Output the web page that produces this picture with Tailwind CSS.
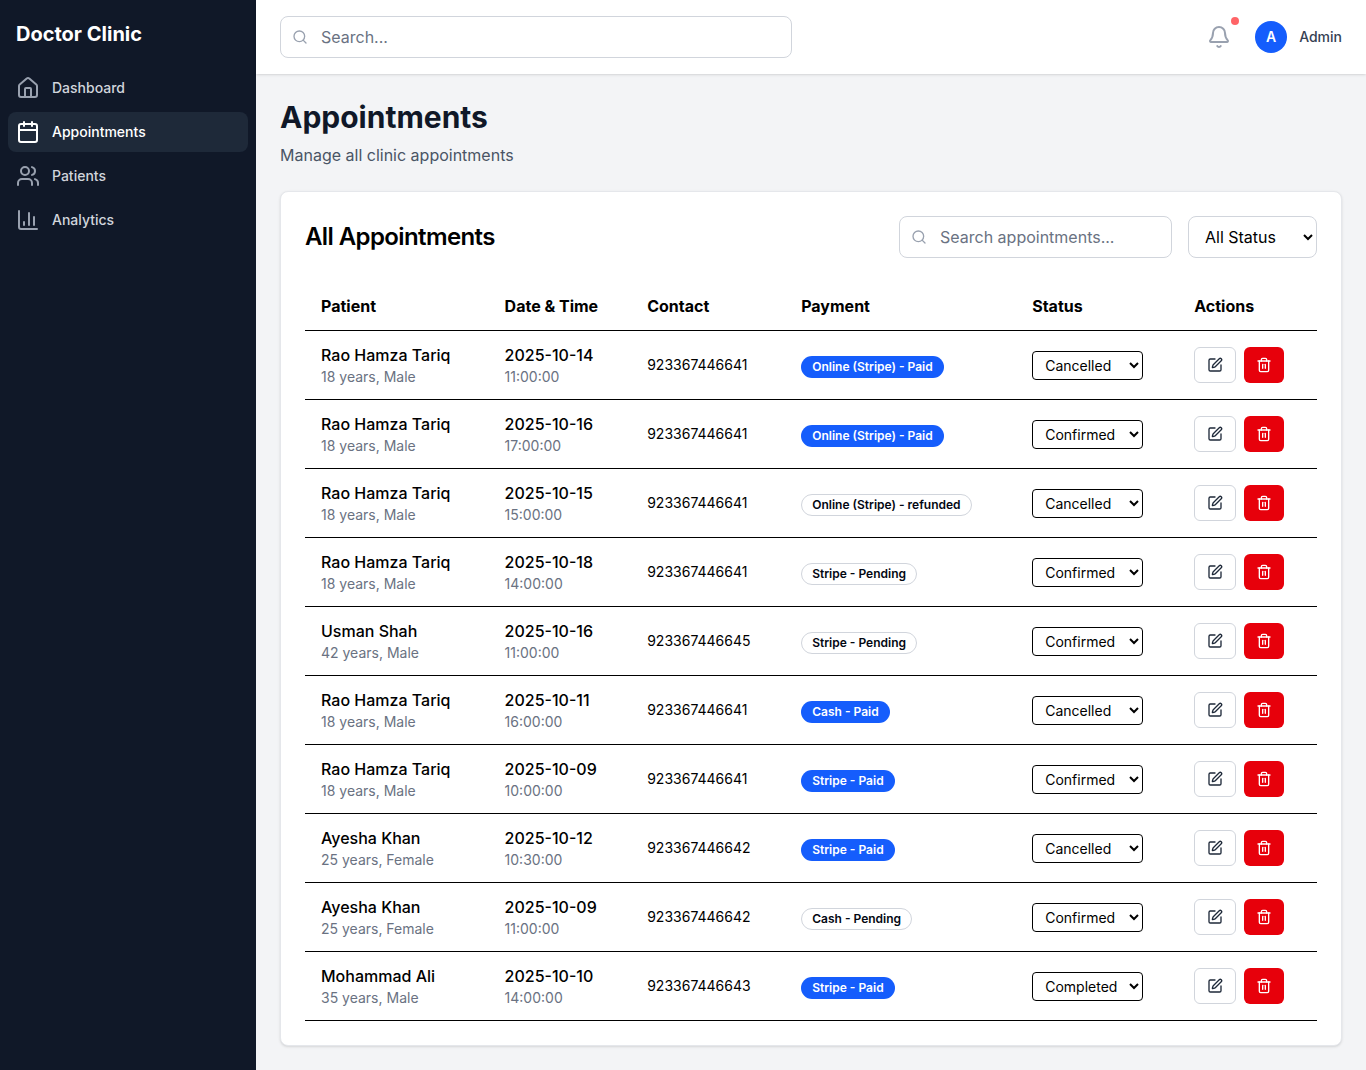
<!DOCTYPE html>
<html lang="en">
  <head>
    <meta charset="UTF-8" />
    <meta name="viewport" content="width=device-width, initial-scale=1.0" />
    <title>Doctor Clinic</title>
    <script src="https://cdn.jsdelivr.net/npm/@tailwindcss/browser@4"></script>
  </head>
  <body class="bg-gray-100 font-[Inter,sans-serif] text-black">
    <div class="flex min-h-screen">
      <aside class="w-64 shrink-0 bg-gray-900">
        <h1 class="pl-4 pt-5 pb-[18px] text-xl leading-7 font-bold text-white">Doctor Clinic</h1>
        <nav class="flex flex-col gap-1 px-2 pt-[2px] text-sm font-medium">
          <a class="flex h-10 items-center gap-3 rounded-lg px-2 text-gray-300">
            <svg class="size-6 text-gray-400" viewBox="0 0 24 24" fill="none" stroke="currentColor" stroke-width="2" stroke-linecap="round" stroke-linejoin="round"><path d="M15 21v-8a1 1 0 0 0-1-1h-4a1 1 0 0 0-1 1v8"/><path d="M3 10a2 2 0 0 1 .709-1.528l7-6a2 2 0 0 1 2.582 0l7 6A2 2 0 0 1 21 10v9a2 2 0 0 1-2 2H5a2 2 0 0 1-2-2z"/></svg>
            Dashboard
          </a>
          <a class="flex h-10 items-center gap-3 rounded-lg bg-gray-800 px-2 text-white">
            <svg class="size-6" viewBox="0 0 24 24" fill="none" stroke="currentColor" stroke-width="2" stroke-linecap="round" stroke-linejoin="round"><path d="M8 2v4"/><path d="M16 2v4"/><rect width="18" height="18" x="3" y="4" rx="2"/><path d="M3 10h18"/></svg>
            Appointments
          </a>
          <a class="flex h-10 items-center gap-3 rounded-lg px-2 text-gray-300">
            <svg class="size-6 text-gray-400" viewBox="0 0 24 24" fill="none" stroke="currentColor" stroke-width="2" stroke-linecap="round" stroke-linejoin="round"><path d="M16 21v-2a4 4 0 0 0-4-4H6a4 4 0 0 0-4 4v2"/><circle cx="9" cy="7" r="4"/><path d="M22 21v-2a4 4 0 0 0-3-3.87"/><path d="M16 3.13a4 4 0 0 1 0 7.75"/></svg>
            Patients
          </a>
          <a class="flex h-10 items-center gap-3 rounded-lg px-2 text-gray-300">
            <svg class="size-6 text-gray-400" viewBox="0 0 24 24" fill="none" stroke="currentColor" stroke-width="2" stroke-linecap="round" stroke-linejoin="round"><path d="M3 3v16a2 2 0 0 0 2 2h16"/><path d="M18 17V9"/><path d="M13 17V5"/><path d="M8 17v-3"/></svg>
            Analytics
          </a>
        </nav>
      </aside>

      <div class="flex min-w-0 flex-1 flex-col">
        <header class="flex h-[74px] items-center justify-between bg-white px-6 shadow-sm">
          <div class="relative w-[512px]">
            <svg class="absolute top-[13px] left-3 size-4 text-gray-400" viewBox="0 0 24 24" fill="none" stroke="currentColor" stroke-width="2" stroke-linecap="round" stroke-linejoin="round"><path d="m21 21-4.34-4.34"/><circle cx="11" cy="11" r="8"/></svg>
            <input placeholder="Search..." class="h-[42px] w-full rounded-lg border border-gray-300 pr-4 pl-10 placeholder:text-gray-500" />
          </div>
          <div class="flex items-center gap-4">
            <div class="relative mr-[5px] flex size-[30px] items-center justify-center">
              <svg class="size-6 text-gray-400" viewBox="0 0 24 24" fill="none" stroke="currentColor" stroke-width="2" stroke-linecap="round" stroke-linejoin="round"><path d="M10.268 21a2 2 0 0 0 3.464 0"/><path d="M3.262 15.326A1 1 0 0 0 4 17h16a1 1 0 0 0 .74-1.673C19.41 13.956 18 12.499 18 8A6 6 0 0 0 6 8c0 4.499-1.411 5.956-2.738 7.326"/></svg>
              <span class="absolute -top-[5px] right-[-5px] size-2 rounded-full bg-red-400"></span>
            </div>
            <div class="flex items-center gap-3">
              <div class="flex size-8 items-center justify-center rounded-full bg-blue-600 text-sm font-semibold text-white">A</div>
              <span class="text-sm font-medium text-gray-700">Admin</span>
            </div>
          </div>
        </header>

        <main class="flex-1 p-6">
          <h2 class="pt-[1px] text-3xl leading-9 font-bold text-gray-900">Appointments</h2>
          <p class="mt-2 text-base text-gray-600">Manage all clinic appointments</p>

          <section class="mt-6 rounded-lg border border-gray-200 bg-white p-6 shadow-sm">
            <div class="mb-6 flex items-center justify-between">
              <h3 class="text-2xl font-semibold tracking-tight">All Appointments</h3>
              <div class="flex items-center gap-4">
                <div class="relative w-[273px]">
                  <svg class="absolute top-[13px] left-3 size-4 text-gray-400" viewBox="0 0 24 24" fill="none" stroke="currentColor" stroke-width="2" stroke-linecap="round" stroke-linejoin="round"><path d="m21 21-4.34-4.34"/><circle cx="11" cy="11" r="8"/></svg>
                  <input placeholder="Search appointments..." class="h-[42px] w-full rounded-lg border border-gray-300 pr-4 pl-10 placeholder:text-gray-500" />
                </div>
                <select class="h-[42px] w-[129px] rounded-lg border border-gray-300 bg-white px-3 text-base">
                  <option>All Status</option>
                </select>
              </div>
            </div>

            <table class="w-full table-fixed border-collapse">
              <colgroup>
                <col class="w-[183.6px]" /><col class="w-[142.6px]" /><col class="w-[154px]" /><col class="w-[231px]" /><col class="w-[162px]" /><col />
              </colgroup>
              <thead>
                <tr class="h-[48px] border-b border-black text-left">
                  <th class="px-4 font-bold">Patient</th>
                  <th class="px-4 font-bold">Date &amp; Time</th>
                  <th class="px-4 font-bold">Contact</th>
                  <th class="px-4 font-bold">Payment</th>
                  <th class="px-4 font-bold">Status</th>
                  <th class="px-4 font-bold">Actions</th>
                </tr>
              </thead>
              <tbody id="rows"></tbody>
            </table>
          </section>
        </main>
      </div>
    </div>

    <script>
      const appointments = [
        ["Rao Hamza Tariq", "18 years, Male", "2025-10-14", "11:00:00", "923367446641", "Online (Stripe) - Paid", "Cancelled"],
        ["Rao Hamza Tariq", "18 years, Male", "2025-10-16", "17:00:00", "923367446641", "Online (Stripe) - Paid", "Confirmed"],
        ["Rao Hamza Tariq", "18 years, Male", "2025-10-15", "15:00:00", "923367446641", "Online (Stripe) - refunded", "Cancelled"],
        ["Rao Hamza Tariq", "18 years, Male", "2025-10-18", "14:00:00", "923367446641", "Stripe - Pending", "Confirmed"],
        ["Usman Shah", "42 years, Male", "2025-10-16", "11:00:00", "923367446645", "Stripe - Pending", "Confirmed"],
        ["Rao Hamza Tariq", "18 years, Male", "2025-10-11", "16:00:00", "923367446641", "Cash - Paid", "Cancelled"],
        ["Rao Hamza Tariq", "18 years, Male", "2025-10-09", "10:00:00", "923367446641", "Stripe - Paid", "Confirmed"],
        ["Ayesha Khan", "25 years, Female", "2025-10-12", "10:30:00", "923367446642", "Stripe - Paid", "Cancelled"],
        ["Ayesha Khan", "25 years, Female", "2025-10-09", "11:00:00", "923367446642", "Cash - Pending", "Confirmed"],
        ["Mohammad Ali", "35 years, Male", "2025-10-10", "14:00:00", "923367446643", "Stripe - Paid", "Completed"],
      ];

      const paidBadge = "inline-block rounded-full border border-transparent bg-blue-600 px-2.5 py-[3px] text-xs leading-[14px] font-semibold text-white";
      const plainBadge = "inline-block rounded-full border border-gray-300 px-2.5 py-[3px] text-xs leading-[14px] font-semibold text-gray-950";

      document.getElementById("rows").innerHTML = appointments
        .map(([name, info, date, time, phone, payment, status]) => `
          <tr class="h-[69px] border-b border-black">
            <td class="px-4">
              <div class="leading-6 font-medium">${name}</div>
              <div class="text-sm leading-5 text-gray-500">${info}</div>
            </td>
            <td class="px-4">
              <div class="leading-6 font-medium">${date}</div>
              <div class="text-sm leading-5 text-gray-500">${time}</div>
            </td>
            <td class="px-4 text-sm">${phone}</td>
            <td class="px-4 pt-0.5"><span class="${payment.endsWith("Paid") ? paidBadge : plainBadge}">${payment}</span></td>
            <td class="px-4 pt-0.5">
              <select class="h-[29px] w-[111px] rounded border border-black bg-white px-2 text-sm">
                <option>${status}</option>
              </select>
            </td>
            <td class="px-4">
              <div class="flex items-center gap-2">
                <button class="flex h-9 w-[42px] items-center justify-center rounded-md border border-gray-300 bg-white text-gray-800">
                  <svg class="size-4" viewBox="0 0 24 24" fill="none" stroke="currentColor" stroke-width="2" stroke-linecap="round" stroke-linejoin="round"><path d="M12 3H5a2 2 0 0 0-2 2v14a2 2 0 0 0 2 2h14a2 2 0 0 0 2-2v-7"/><path d="M18.375 2.625a1 1 0 0 1 3 3l-9.013 9.014a2 2 0 0 1-.853.505l-2.873.84a.5.5 0 0 1-.62-.62l.84-2.873a2 2 0 0 1 .506-.852z"/></svg>
                </button>
                <button class="flex h-9 w-10 items-center justify-center rounded-md bg-red-600 text-white">
                  <svg class="size-4" viewBox="0 0 24 24" fill="none" stroke="currentColor" stroke-width="2" stroke-linecap="round" stroke-linejoin="round"><path d="M3 6h18"/><path d="M19 6v14c0 1-1 2-2 2H7c-1 0-2-1-2-2V6"/><path d="M8 6V4c0-1 1-2 2-2h4c1 0 2 1 2 2v2"/><line x1="10" x2="10" y1="11" y2="17"/><line x1="14" x2="14" y1="11" y2="17"/></svg>
                </button>
              </div>
            </td>
          </tr>`)
        .join("");
    </script>
  </body>
</html>
